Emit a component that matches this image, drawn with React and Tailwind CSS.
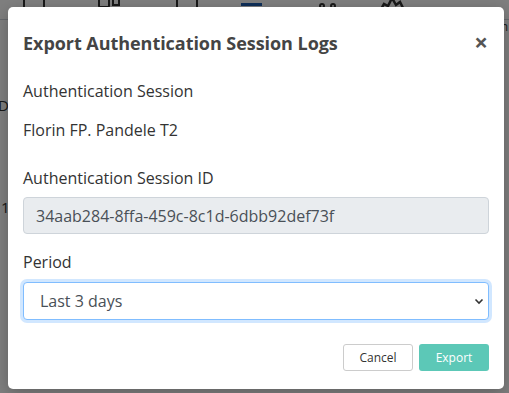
import React from "react";

const App = () => {
  return (
    <div
      className="relative w-[509px] h-[393px] overflow-hidden bg-white"
      style={{ fontFamily: '"Open Sans", "Liberation Sans", sans-serif' }}
    >
      {/* page behind the dialog */}
      <div className="flex items-start h-[20px] border-b border-gray-300 text-[#333]">
        <div className="ml-[23px] -mt-[8px] w-[22px] h-[20px] rounded-[4px] border-2 border-[#333]" />
        <div className="ml-[53px] -mt-[6px] flex gap-[2px]">
          <div className="w-[12px] h-[14px] rounded-[2px] border-2 border-[#333]" />
          <div className="mt-[4px] w-[8px] h-[8px] border-2 border-[#333]" />
        </div>
        <div className="ml-[56px] -mt-[8px] w-[22px] h-[20px] rounded-[4px] border-2 border-[#333]" />
        <div className="ml-[43px] mt-[3px] w-[21px] h-[3px] bg-[#1e5fb3]" />
        <div className="ml-[57px] mt-[3px] flex gap-[5px]">
          <div className="w-[6px] h-[6px] rounded-full border-2 border-[#333]" />
          <div className="w-[6px] h-[6px] rounded-full border-2 border-[#333]" />
        </div>
        <svg className="ml-[43px] -mt-[4px]" width="26" height="16" viewBox="0 0 26 16">
          <path d="M1 15 L5 8 L9 10 L13 2 L17 9 L21 6 L25 14" fill="none" stroke="#333" strokeWidth="2.5" />
        </svg>
      </div>
      <div className="absolute left-[-2px] top-[94px] text-[15px] text-[#333]">De</div>
      <div className="absolute left-[1px] top-[196px] text-[15px] text-[#333]">1</div>
      <div className="absolute right-[1px] top-[18px] text-[12px] text-[#333]">n</div>

      {/* backdrop */}
      <div className="absolute inset-0 bg-black/50" />

      {/* dialog */}
      <div className="absolute left-[8px] top-[7px] w-[496px] h-[382px] rounded-[5px] bg-white shadow-[0_4px_16px_rgba(0,0,0,0.25)] flex flex-col">
        <div className="flex items-center justify-between pl-[15px] pr-[16px] pt-[15px] h-[56px]">
          <h5 className="text-[18px] font-bold text-[#444] leading-none tracking-[-0.05px]">
            Export Authentication Session Logs
          </h5>
          <span className="text-[24px] font-bold text-[#555] leading-none -mt-[1px]">×</span>
        </div>

        <div className="px-[15px] pt-[16px] text-[16px] text-[#333]">
          <div className="leading-[24px]">Authentication Session</div>
          <div className="mt-[15px] leading-[24px]">Florin FP. Pandele T2</div>

          <div className="mt-[24px] leading-[24px]">Authentication Session ID</div>
          <div className="mt-[7px] h-[37px] rounded-[4px] border border-[#ced4da] bg-[#e9ecef] flex items-center px-[12px] text-[#495057]">
            34aab284-8ffa-459c-8c1d-6dbb92def73f
          </div>

          <div className="mt-[16px] leading-[24px]">Period</div>
          <div className="mt-[8px] h-[38px] rounded-[4px] border border-[#80bdff] bg-white shadow-[0_0_0_3px_rgba(0,123,255,0.18)] flex items-center justify-between pl-[16px] pr-[4px] text-[#495057]">
            <span>Last 3 days</span>
            <svg width="10" height="7" viewBox="0 0 10 7">
              <path d="M1.5 1.5 L5 5 L8.5 1.5" fill="none" stroke="#333" strokeWidth="1.6" />
            </svg>
          </div>
        </div>

        <div className="flex justify-end gap-[6px] px-[15px] mt-[24px]">
          <button className="w-[70px] h-[27px] rounded-[3px] border border-[#ccc] bg-white text-[12px] text-[#333]">
            Cancel
          </button>
          <button className="w-[70px] h-[27px] rounded-[3px] bg-[#5cc8b7] text-[12px] text-white">
            Export
          </button>
        </div>
      </div>
    </div>
  );
};

export default App;
